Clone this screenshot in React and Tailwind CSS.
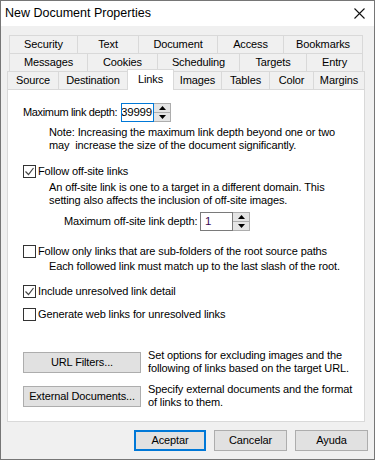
import React from "react";

const row1 = [
  ["Security", "w-[68px]"],
  ["Text", "w-[61px]"],
  ["Document", "w-[79px]"],
  ["Access", "w-[66px]"],
  ["Bookmarks", "w-[80px] border-r"],
];

const row2 = [
  ["Messages", "w-[78px]"],
  ["Cookies", "w-[70px]"],
  ["Scheduling", "w-[82px]"],
  ["Targets", "w-[67px]"],
  ["Entry", "w-[57px] border-r"],
];

function Tab({ label, cls }) {
  return (
    <div
      className={`h-[18px] flex items-center justify-center border-t border-l border-[#d9d9d9] bg-[#f0f0f0] ${cls}`}
    >
      {label}
    </div>
  );
}

function Arrow({ up }) {
  return (
    <svg width="7" height="4" viewBox="0 0 7 4">
      <path d={up ? "M3.5 0L7 4H0z" : "M0 0h7L3.5 4z"} fill="#000" />
    </svg>
  );
}

function Spin({ value, focused }) {
  return (
    <div className="flex h-[19px] shrink-0">
      <div
        className={
          focused
            ? "w-[33px] h-full flex items-center justify-end overflow-hidden bg-white border border-[#0078d7] pr-[1px]"
            : "w-[33px] h-full flex items-center overflow-hidden bg-white border border-[#7a7a7a] pl-[4px] text-[#3b0a55]"
        }
      >
        <span className="whitespace-nowrap text-[11.5px] tracking-[-0.2px]">{value}</span>
      </div>
      <div className="w-[17px] h-full flex flex-col border border-l-0 border-[#adadad] bg-[#e5e5e5]">
        <div className="flex-1 flex items-center justify-center border-b border-[#adadad]">
          <Arrow up />
        </div>
        <div className="flex-1 flex items-center justify-center">
          <Arrow />
        </div>
      </div>
    </div>
  );
}

function Check({ checked, label }) {
  return (
    <div className="flex items-center h-[13px]">
      <span className="w-[13px] h-[13px] border border-[#333] bg-white flex items-center justify-center shrink-0">
        {checked && (
          <svg width="11" height="11" viewBox="0 0 11 11">
            <path d="M1.5 5.5l3 3 5-6.5" stroke="#444" strokeWidth="1.2" fill="none" />
          </svg>
        )}
      </span>
      <span className="ml-[2px] whitespace-nowrap">{label}</span>
    </div>
  );
}

function Btn({ children, cls }) {
  return (
    <div
      className={`h-[21px] flex items-center justify-center whitespace-nowrap shrink-0 bg-[#e1e1e1] ${cls}`}
    >
      {children}
    </div>
  );
}

export default function App() {
  return (
    <div
      className="w-[375px] h-[460px] flex flex-col border border-[#767676] bg-[#f0f0f0] text-black text-[11px] leading-[13px] tracking-[-0.12px]"
      style={{ fontFamily: '"Liberation Sans", Arial, sans-serif' }}
    >
      {/* Title bar */}
      <div className="h-[25px] shrink-0 bg-white flex items-center justify-between pl-[4px] pr-[9px]">
        <span className="text-[12.5px] tracking-normal">New Document Properties</span>
        <svg width="11" height="11" viewBox="0 0 11 11">
          <path d="M0.5 0.5l10 10M10.5 0.5l-10 10" stroke="#111" strokeWidth="1.1" />
        </svg>
      </div>

      {/* Tabs */}
      <div className="pt-[9px] pl-[6px]">
        <div className="flex ml-[2px]">
          {row1.map(([l, c]) => (
            <Tab key={l} label={l} cls={c} />
          ))}
        </div>
        <div className="flex ml-[2px]">
          {row2.map(([l, c]) => (
            <Tab key={l} label={l} cls={c} />
          ))}
        </div>
        <div className="flex items-start">
          <Tab label="Source" cls="w-[51px]" />
          <Tab label="Destination" cls="w-[69px]" />
          <div className="relative z-10 w-[47px] h-[21px] -mt-[2px] -mb-[1px] flex items-start justify-center pt-[3px] bg-white border-t border-l border-r border-[#d9d9d9]">
            Links
          </div>
          <Tab label="Images" cls="w-[47px] border-l-0" />
          <Tab label="Tables" cls="w-[48px]" />
          <Tab label="Color" cls="w-[44px]" />
          <Tab label="Margins" cls="w-[52px] border-r" />
        </div>

        {/* Panel */}
        <div className="w-[358px] h-[333px] border border-[#d9d9d9] bg-white pl-[15px] flex flex-col">
          <div className="flex items-center mt-[13px]">
            <span className="w-[98px] shrink-0 whitespace-nowrap tracking-[-0.35px]">Maximum link depth:</span>
            <Spin value="39999" focused />
          </div>
          <div className="mt-[4px] ml-[26px] whitespace-pre">
            {"Note: Increasing the maximum link depth beyond one or two\nmay  increase the size of the document significantly."}
          </div>

          <div className="mt-[13px]">
            <Check checked label="Follow off-site links" />
          </div>
          <div className="mt-[3px] ml-[26px] whitespace-pre">
            {"An off-site link is one to a target in a different domain. This\nsetting also affects the inclusion of off-site images."}
          </div>
          <div className="flex items-center mt-[5px] ml-[41px]">
            <span className="w-[136px] shrink-0 whitespace-nowrap">Maximum off-site link depth:</span>
            <Spin value="1" />
          </div>

          <div className="mt-[14px]">
            <Check label="Follow only links that are sub-folders of the root source paths" />
          </div>
          <div className="mt-[2px] ml-[26px] whitespace-nowrap">
            Each followed link must match up to the last slash of the root.
          </div>

          <div className="mt-[12px]">
            <Check checked label="Include unresolved link detail" />
          </div>
          <div className="mt-[10px]">
            <Check label="Generate web links for unresolved links" />
          </div>

          <div className="flex items-center mt-[28px] h-[26px]">
            <Btn cls="w-[118px] border border-[#adadad]">URL Filters...</Btn>
            <div className="ml-[7px] whitespace-pre">
              {"Set options for excluding images and the\nfollowing of links based on the target URL."}
            </div>
          </div>
          <div className="flex items-center mt-[8px] h-[26px]">
            <Btn cls="w-[118px] border border-[#adadad]">External Documents...</Btn>
            <div className="ml-[7px] whitespace-pre">
              {"Specify external documents and the format\nof links to them."}
            </div>
          </div>
        </div>
      </div>

      {/* Dialog buttons */}
      <div className="flex justify-end gap-[8px] mt-[8px] pr-[6px]">
        <Btn cls="w-[72px] border-2 border-[#0078d7]">Aceptar</Btn>
        <Btn cls="w-[73px] border border-[#adadad]">Cancelar</Btn>
        <Btn cls="w-[73px] border border-[#adadad]">Ayuda</Btn>
      </div>
    </div>
  );
}
